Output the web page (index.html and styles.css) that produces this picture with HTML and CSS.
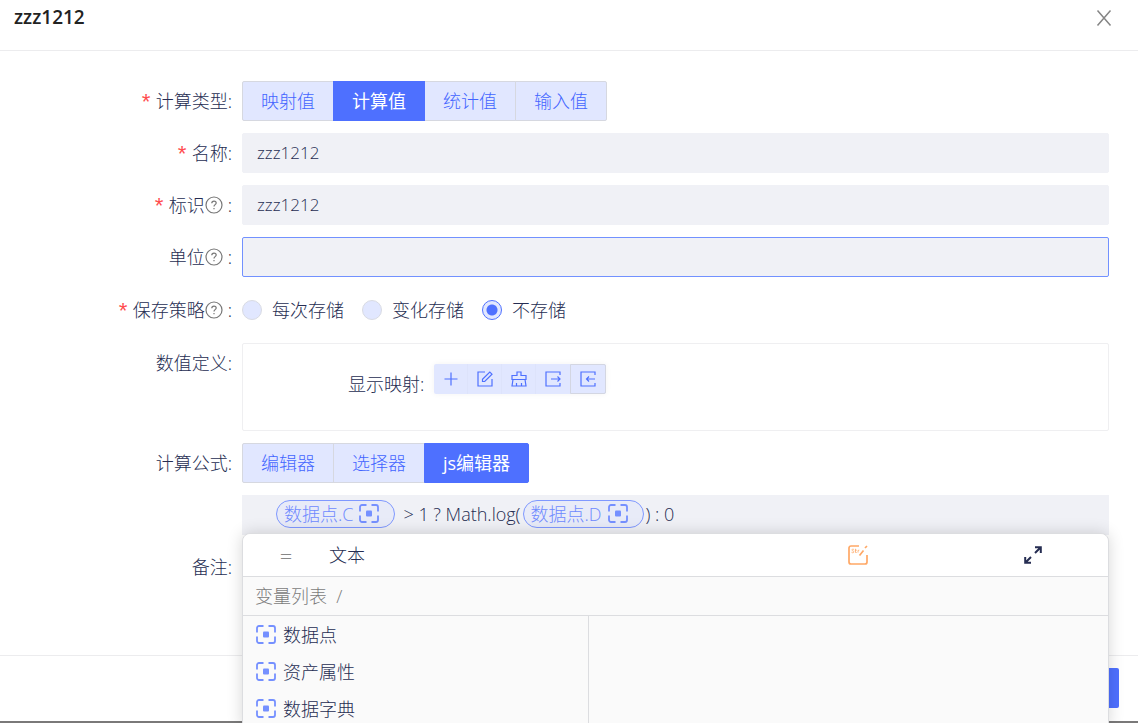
FILE: index.html
```html
<!DOCTYPE html>
<html lang="zh-CN">
<head>
<meta charset="utf-8">
<title>zzz1212</title>
<link rel="stylesheet" href="styles.css">
</head>
<body>
<svg class="defs" width="0" height="0" aria-hidden="true">
  <symbol id="help" viewBox="0 0 18 18">
    <circle cx="9" cy="9" r="8"/>
    <path d="M6.800 7.200c0-1.300.9-2.100 2.200-2.100s2.200.8 2.200 2c0 1.500-2.200 1.600-2.200 3.300"/>
    <path d="M9 12v1.300"/>
  </symbol>
  <symbol id="focus" viewBox="0 0 20 20">
    <path d="M1 7.500V3a2 2 0 0 1 2-2h4.500M12.500 1H17a2 2 0 0 1 2 2v4.500M19 11.500V16a2 2 0 0 1-2 2h-4.500M7.500 18H3a2 2 0 0 1-2-2v-4.500"/>
    <rect x="7" y="6.500" width="6" height="6" rx="1" fill="currentColor" stroke="none"/>
  </symbol>
</svg>
<main class="dialog">
  <header class="dialog-head">
    <h1 class="dialog-title">zzz1212</h1>
    <button class="close" type="button" aria-label="关闭">
      <svg width="16" height="18" viewBox="0 0 16 18"><path d="M1.500 1.500l13 15M14.500 1.500l-13 15"/></svg>
    </button>
  </header>

  <form class="form">
    <div class="row">
      <span class="label required" id="l-type">计算类型:</span>
      <div class="segment" role="group" aria-labelledby="l-type">
        <button type="button">映射值</button>
        <button type="button" class="active">计算值</button>
        <button type="button">统计值</button>
        <button type="button">输入值</button>
      </div>
    </div>
    <div class="row">
      <label class="label required" for="name">名称:</label>
      <input class="input" id="name" type="text" value="zzz1212">
    </div>
    <div class="row">
      <label class="label required" for="ident">标识<svg class="help"><use href="#help"/></svg>:</label>
      <input class="input" id="ident" type="text" value="zzz1212">
    </div>
    <div class="row">
      <label class="label" for="unit">单位<svg class="help"><use href="#help"/></svg>:</label>
      <input class="input current" id="unit" type="text">
    </div>
    <div class="row row-radio">
      <span class="label required" id="l-save">保存策略<svg class="help"><use href="#help"/></svg>:</span>
      <div class="radios" role="radiogroup" aria-labelledby="l-save">
        <label class="radio"><input type="radio" name="save">每次存储</label>
        <label class="radio"><input type="radio" name="save">变化存储</label>
        <label class="radio"><input type="radio" name="save" checked>不存储</label>
      </div>
    </div>
    <div class="row">
      <span class="label">数值定义:</span>
      <div class="card">
        <span class="card-label">显示映射:</span>
        <div class="tools">
          <button type="button" aria-label="新增"><svg viewBox="0 0 16 16"><path d="M8 1.500v13M1.500 8h13"/></svg></button>
          <button type="button" aria-label="编辑"><svg viewBox="0 0 16 16"><path d="M8 1H1v14h14V8"/><path d="M5.500 10.500V8.200L12.800 1l2.200 2.200-7.300 7.300z"/></svg></button>
          <button type="button" aria-label="清空"><svg viewBox="0 0 16 16"><path d="M1 8.500V4.500h5V1h4v3.500h5v4zM2 8.500L1 15h14l-1-6.500M5.500 15v-3M10.500 15v-3"/></svg></button>
          <button type="button" aria-label="导出"><svg viewBox="0 0 16 16"><path d="M15 4V1H1v14h14v-3M6 8h9M12.500 5.500L15 8l-2.500 2.500"/></svg></button>
          <button type="button" class="outlined" aria-label="导入"><svg viewBox="0 0 16 16"><path d="M15 4V1H1v14h14v-3M15 8H6.500M9 5.500L6.500 8 9 10.500"/></svg></button>
        </div>
      </div>
    </div>
    <div class="row">
      <span class="label" id="l-formula">计算公式:</span>
      <div class="segment" role="group" aria-labelledby="l-formula">
        <button type="button">编辑器</button>
        <button type="button">选择器</button>
        <button type="button" class="active">js编辑器</button>
      </div>
    </div>
    <div class="row">
      <div class="formula">
        <span class="pill">数据点.C<svg class="focus"><use href="#focus"/></svg></span>
        <span class="code code-first">&gt; 1 ? Math.log(</span>
        <span class="pill">数据点.D<svg class="focus"><use href="#focus"/></svg></span>
        <span class="code">) : 0</span>

        <section class="picker">
          <div class="picker-head">
            <span class="equals">=</span>
            <span>文本</span>
            <button type="button" class="icon-button str" aria-label="字符串">
              <svg width="20" height="20" viewBox="0 0 20 20"><path d="M11 1H3a2 2 0 0 0-2 2v14a2 2 0 0 0 2 2h14a2 2 0 0 0 2-2v-7"/><path d="M11.500 10.500l4-5M17 3l2-2"/><path class="thin" d="M6 4.500C4.500 3.800 3.500 4.500 4 5.300s2.200.7 2 1.700-1.800.9-2.500.3M7.500 3.800v3.700h1.200M6.800 5.200h2M10 7.600V5.400l1.300-.2"/></svg>
            </button>
            <button type="button" class="icon-button" aria-label="展开">
              <svg width="18" height="18" viewBox="0 0 18 18"><path d="M11 1.200h5.800V7M16.500 1.500L11 7M7 16.800H1.200V11M1.500 16.500L7 11"/></svg>
            </button>
          </div>
          <div class="crumb">变量列表&nbsp; /</div>
          <div class="picker-body">
            <ul class="vars">
              <li><svg class="focus"><use href="#focus"/></svg>数据点</li>
              <li><svg class="focus"><use href="#focus"/></svg>资产属性</li>
              <li><svg class="focus"><use href="#focus"/></svg>数据字典</li>
            </ul>
          </div>
        </section>
      </div>
    </div>
    <div class="row">
      <span class="label">备注:</span>
    </div>
  </form>

  <footer class="dialog-foot">
    <button type="button" class="primary" aria-label="确定"></button>
  </footer>
</main>
</body>
</html>
```
FILE: styles.css
```css
* {
  box-sizing: border-box;
}

body {
  margin: 0;
  height: 100vh;
  overflow: hidden;
  background: #7a7979;
  color: #262d52;
  font: 300 18px/40px "Open Sans", "Noto Sans CJK SC", sans-serif;
}

button,
input {
  margin: 0;
  font: inherit;
  color: inherit;
}

button {
  padding: 0;
  border: 0;
  background: none;
}

svg {
  flex: none;
  fill: none;
  stroke: currentColor;
}

.defs {
  position: absolute;
}

.dialog {
  display: flex;
  flex-direction: column;
  height: calc(100vh - 2px);
  background: #fff;
}

.dialog-head {
  display: flex;
  flex: none;
  align-items: flex-start;
  justify-content: space-between;
  height: 51px;
  padding: 0 26px 0 14px;
  border-bottom: 1px solid #ececee;
}

.dialog-title {
  margin: 0;
  color: #222;
  font-size: 19px;
  font-weight: 600;
  line-height: 34px;
}

.close {
  display: flex;
  padding-top: 9px;
  color: #858585;
}

.close svg {
  stroke-width: 1.5;
}

.form {
  display: flex;
  flex: 1;
  flex-direction: column;
  gap: 12px;
  min-height: 0;
  padding: 30px 29px 0 0;
}

.row {
  display: flex;
  flex: none;
}

.row-radio {
  padding: 1px 0;
}

.row > :not(.label):first-child {
  margin-left: 242px;
}

.label {
  display: flex;
  flex: none;
  align-items: center;
  justify-content: flex-end;
  width: 242px;
  height: 40px;
  padding-right: 10px;
}

.required::before {
  content: "*";
  height: 40px;
  padding-top: 8px;
  margin-right: 3px;
  color: #ff4d4f;
  font-family: "Liberation Mono", monospace;
  font-size: 22px;
}

.help {
  width: 18px;
  height: 18px;
  margin-right: 5px;
  color: #777;
  stroke-width: 1.2;
}

.segment {
  display: flex;
}

.segment button {
  height: 40px;
  padding: 0 18px;
  border: 1px solid #d6d8e0;
  background: #e1e7ff;
  color: #4365ff;
  line-height: 38px;
}

.segment button + button {
  margin-left: -1px;
}

.segment button:first-child {
  border-radius: 2px 0 0 2px;
}

.segment button:last-child {
  border-radius: 0 2px 2px 0;
}

.segment .active {
  z-index: 1;
  border-color: #4e70ff;
  background: #4e70ff;
  color: #fff;
  font-weight: 400;
}

.input {
  flex: 1;
  min-width: 0;
  height: 40px;
  padding: 0 14px;
  border: 1px solid #f0f1f6;
  border-radius: 2px;
  outline: 0;
  background: #f0f1f6;
  font-size: 17px;
}

.input.current {
  border-color: #7291ff;
}

.radios {
  display: flex;
  gap: 18px;
}

.radio {
  display: flex;
  align-items: center;
  gap: 10px;
}

.radio input {
  width: 20px;
  height: 20px;
  border: 1px solid #d9dbe3;
  border-radius: 50%;
  appearance: none;
  background: #e1e7ff;
}

.radio input:checked {
  border-color: #4e70ff;
  background: radial-gradient(circle, #4e70ff 5px, #e1e7ff 6px);
}

.card {
  display: flex;
  flex: 1;
  gap: 10px;
  padding: 20px 20px 26px 105px;
  border: 1px solid #efeff1;
  border-radius: 2px;
}

.tools {
  display: flex;
  height: 30px;
  border-radius: 2px;
  background: #e1e7ff;
  box-shadow: 0 0 6px rgba(0, 0, 0, 0.05);
}

.tools button {
  display: flex;
  align-items: center;
  justify-content: center;
  width: 34px;
  color: #4e70ff;
}

.tools button:nth-child(-n + 3) {
  border-right: 1px solid #dde3fb;
}

.tools svg {
  width: 16px;
  height: 16px;
  stroke-width: 1.2;
}

.tools .outlined {
  width: 36px;
  border: 1px solid #d3d6e2;
  border-radius: 0 2px 2px 0;
}

.formula {
  position: relative;
  display: flex;
  flex: 1;
  align-items: flex-start;
  height: 40px;
  padding: 5px 34px;
  background: #f0f1f6;
  line-height: 28px;
}

.pill {
  display: flex;
  align-items: center;
  gap: 6px;
  height: 28px;
  padding: 0 15px 0 7px;
  border: 1px solid #7f98ff;
  border-radius: 14px;
  background: #e8ebf8;
  color: #6f8aff;
}

.code {
  padding: 0 2px;
  white-space: pre;
}

.code-first {
  padding-left: 8px;
}

.focus {
  width: 20px;
  height: 20px;
  color: #7590ff;
  stroke-width: 1.8;
}

.picker {
  position: absolute;
  z-index: 2;
  top: 38px;
  right: 0;
  left: 0;
  border: 1px solid #dcdde0;
  border-radius: 8px 8px 0 0;
  background: #fafafa;
  box-shadow: 0 0 16px rgba(0, 0, 0, 0.16);
}

.picker-head {
  display: grid;
  grid-template-columns: 86px 1fr 200px 150px;
  align-items: center;
  height: 43px;
  border-bottom: 1px solid #dcdde0;
  border-radius: 8px 8px 0 0;
  background: #fff;
}

.equals {
  color: #888;
  font-size: 22px;
  text-align: center;
}

.icon-button {
  display: flex;
  justify-content: center;
  stroke-width: 2;
}

.str {
  color: #ffa866;
  stroke-width: 1.7;
}

.thin {
  stroke-width: 0.8;
}

.crumb {
  height: 39px;
  padding-left: 12px;
  border-bottom: 1px solid #dcdde0;
  color: #7c7c7c;
  line-height: 38px;
}

.picker-body {
  display: grid;
  grid-template-columns: 2fr 3fr;
}

.vars {
  margin: 0;
  padding: 0 0 0 13px;
  border-right: 1px solid #dcdde0;
  list-style: none;
}

.vars li {
  display: flex;
  align-items: center;
  gap: 7px;
  height: 37px;
}

.dialog-foot {
  display: flex;
  flex: none;
  justify-content: flex-end;
  padding: 12px 19px 13px;
  border-top: 1px solid #ececee;
}

.primary {
  width: 80px;
  height: 40px;
  border-radius: 2px;
  background: #4e70ff;
}
```
